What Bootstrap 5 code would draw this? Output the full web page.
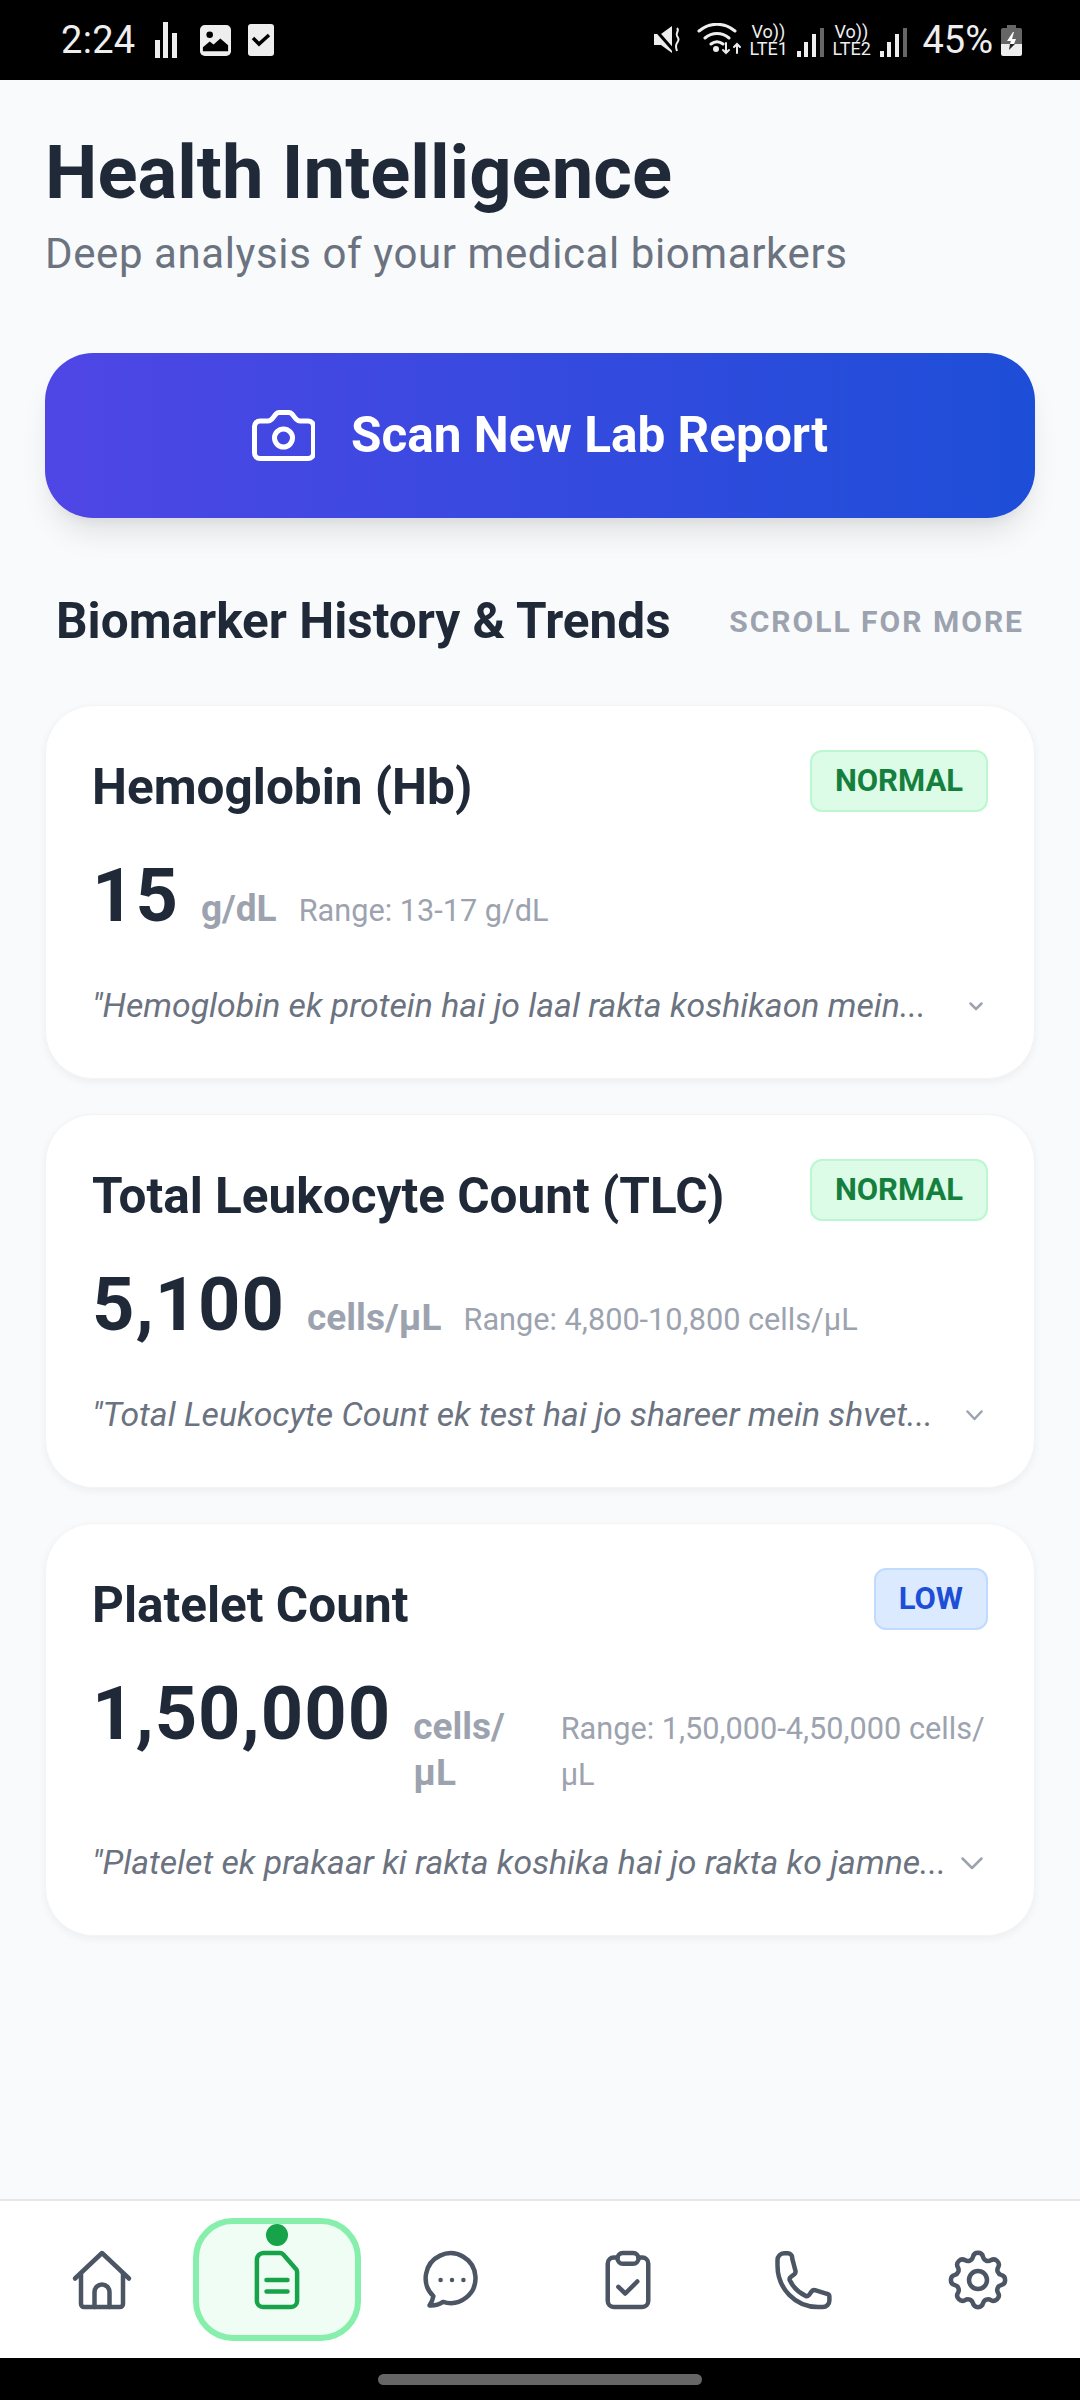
<!DOCTYPE html>
<html lang="en">
<head>
    <meta charset="UTF-8">
    <meta name="viewport" content="width=device-width, initial-scale=1.0">
    <title>Health Intelligence</title>
    <link rel="stylesheet" href="https://cdn.jsdelivr.net/npm/bootstrap@5.3.0/dist/css/bootstrap.min.css">
    <style>
        html, body { height: 2400px; overflow: hidden; }
        body { background: #f9fafb; font-family: Roboto, "Liberation Sans", sans-serif; color: #1f2937; }

        /* status bar */
        .status-top { height: 80px; background: #000; color: #eee; padding: 0 58px 0 61px; }
        .status-time { font-size: 38px; line-height: 1; margin-right: 20px; letter-spacing: .3px; }
        .status-pct { font-size: 38px; line-height: 1; margin-left: 15px; margin-right: 8px; }
        .net-label { font-size: 18px; line-height: 17px; text-align: center; color: #eee; width: 38px; }
        .net-bars { margin-left: 10px; }
        .status-gap-a { margin-left: 23px; }
        .status-gap-c { margin-left: 17px; }
        .status-gap-b { margin-left: 15px; }
        .status-gap-d { margin-left: 7px; }

        /* header */
        .page-wrap { padding: 0 45px; }
        .page-title { font-size: 74.2px; font-weight: 700; line-height: 80px; margin: 53px 0 0; color: #1f2937; }
        .page-sub { font-size: 42px; line-height: 52px; color: #6b7280; letter-spacing: .6px; margin: 15px 0 0; }

        .scan-btn { height: 165px; margin-top: 73px; border: 0; border-radius: 48px; color: #fff; font-size: 49.5px; font-weight: 700;
            background: linear-gradient(90deg, #4f46e5, #1d4ed8); box-shadow: 0 20px 30px -6px rgba(0,0,0,.1), 0 8px 12px -6px rgba(0,0,0,.06); gap: 36px; }
        .scan-btn:hover { color: #fff; }

        .sec-head { margin-top: 73px; padding: 0 11px; }
        .sec-title { font-size: 49.5px; font-weight: 700; line-height: 60px; margin: 0; color: #1f2937; }
        .sec-hint { font-size: 30px; font-weight: 700; color: #9ca3af; letter-spacing: 2px; }

        .cards-wrap { margin-top: 54px; }
        .lab-card { border: 1px solid #f3f4f6; border-radius: 48px; padding: 44px 46px 49px; box-shadow: 0 3px 8px rgba(0,0,0,.05); background: #fff; margin-bottom: 35px; }
        .lab-name { font-size: 49.5px; font-weight: 700; line-height: 60px; margin: 7px 0 0; color: #1f2937; }
        .lab-tag { font-size: 31px; font-weight: 700; line-height: 36px; padding: 11px 23px; border-radius: 12px; border: 2px solid; }
        .tag-ok { background: #dcfce7; border-color: #bbf7d0; color: #15803d; }
        .tag-low { background: #dbeafe; border-color: #bfdbfe; color: #1d4ed8; }
        .lab-nums { margin-top: 34px; gap: 22px; }
        .lab-val { font-size: 74px; font-weight: 700; line-height: 90px; color: #1f2937; letter-spacing: 1px; }
        .lab-unit { font-size: 37px; font-weight: 700; line-height: 46px; color: #9ca3af; }
        .lab-range { font-size: 30.7px; line-height: 46px; color: #9ca3af; }
        .lab-note { margin-top: 42px; }
        .lab-note p { margin: 0; font-size: 33.8px; line-height: 46px; font-style: italic; color: #6b7280; white-space: nowrap; }
        .chev { margin-left: auto; margin-right: 5px; fill: none; stroke: #9ca3af; stroke-width: 2.5; stroke-linecap: round; stroke-linejoin: round; }
        .chev-s { width: 14px; height: 9px; }
        .chev-m { width: 17px; height: 11px; }
        .chev-l { width: 22px; height: 13px; }

        /* bottom nav */
        .nav-bottom { height: 159px; background: #fff; border-top: 2px solid #e5e7eb; padding: 17px 14px; margin-top: auto; }
        .nav-cell { flex: 1 1 0; border: 6px solid transparent; border-radius: 40px; margin: 0 3.5px; position: relative; }
        .nav-cell.is-on { background: #f0fdf4; border-color: #86efac; }
        .nav-dot { position: absolute; top: 0; left: 50%; width: 22px; height: 22px; margin-left: -11px; border-radius: 50%; background: #16a34a; }
        .nav-cell svg { width: 72px; height: 72px; fill: none; stroke: #4b5563; stroke-width: 1.5; stroke-linecap: round; stroke-linejoin: round; }
        .nav-cell.is-on svg { stroke: #16a34a; }
        .gesture-bar { height: 42px; background: #000; }
        .gesture-pill { width: 324px; height: 11px; border-radius: 6px; background: #666; margin-top: 16px; }
        .main-col { height: 2400px; }
    </style>
</head>
<body>
<div class="d-flex flex-column main-col">

    <!-- status bar -->
    <div class="status-top d-flex align-items-center">
        <span class="status-time">2:24</span>
        <svg width="22" height="36" viewBox="0 0 22 36" fill="#eee"><rect x="0" y="18" width="5" height="18"/><rect x="8" y="0" width="5" height="36"/><rect x="17" y="11" width="5" height="25"/></svg>
        <svg class="status-gap-a" width="31" height="31" viewBox="0 0 32 32"><rect width="32" height="32" rx="5" fill="#eee"/><circle cx="10" cy="10" r="3.4" fill="#000"/><path d="M3 27v-4l7-6 4 3 7-6 8 7v6z" fill="#000"/></svg>
        <svg class="status-gap-c" width="26" height="32" viewBox="0 0 26 32"><rect width="26" height="32" rx="3" fill="#eee"/><path d="M5 14l6 6 10-9" fill="none" stroke="#000" stroke-width="3.5"/></svg>

        <div class="ms-auto d-flex align-items-center">
            <svg width="29" height="30" viewBox="0 0 29 30"><path d="M1 9h7l11-8v27l-11-8H1z" fill="#eee"/><path d="M0 2l22 25" stroke="#000" stroke-width="3"/><path d="M24 3c3 3-2 5 0 8s2 4 0 7-1 5 0 8" fill="none" stroke="#eee" stroke-width="2"/></svg>
            <svg class="status-gap-b" width="45" height="34" viewBox="0 0 45 34" fill="none" stroke="#eee" stroke-width="3" stroke-linecap="round"><path d="M2 8c11-9 25-9 36 0M8 15c7-6 17-6 24 0M14 21c4-3 8-3 12 0"/><circle cx="19" cy="26" r="1.5" fill="#eee"/><path d="M29 20v10M26 27l3 3 3-3M40 30V21M37 24l3-3 3 3" stroke-width="2"/></svg>
            <div class="status-gap-d d-flex align-items-end">
                <div class="net-label">Vo))<br>LTE1</div>
                <svg class="net-bars" width="27" height="29" viewBox="0 0 27 29" fill="#eee"><rect y="23" width="4" height="6"/><rect x="7" y="14" width="4" height="15"/><rect x="15" y="6" width="4" height="23"/><rect x="23" y="0" width="4" height="29" fill="#666"/></svg>
            </div>
            <div class="ms-2 d-flex align-items-end">
                <div class="net-label">Vo))<br>LTE2</div>
                <svg class="net-bars" width="27" height="29" viewBox="0 0 27 29" fill="#eee"><rect y="23" width="4" height="6"/><rect x="7" y="14" width="4" height="15"/><rect x="15" y="6" width="4" height="23"/><rect x="23" y="0" width="4" height="29" fill="#666"/></svg>
            </div>
            <span class="status-pct">45%</span>
            <svg width="21" height="31" viewBox="0 0 21 31"><path d="M6 0h9v3h4a2 2 0 0 1 2 2v14H0V5a2 2 0 0 1 2-2h4z" fill="#666"/><path d="M0 19h21v10a2 2 0 0 1-2 2H2a2 2 0 0 1-2-2z" fill="#eee"/><path d="M12 7l-6 9h4l-1 3h4l2-5h-4l2-7z" fill="#fff"/><path d="M9 19l-1 6 6-6z" fill="#222"/></svg>
        </div>
    </div>

    <div class="page-wrap">
        <h1 class="page-title">Health Intelligence</h1>
        <p class="page-sub">Deep analysis of your medical biomarkers</p>

        <button type="button" class="btn scan-btn w-100 d-flex align-items-center justify-content-center">
            <svg width="63" height="51" viewBox="0 0 63 51" fill="none" stroke="#fff" stroke-width="5" stroke-linejoin="round"><path d="M8 11h8c2 0 3-1 4-2l4-5c1-1 2-1.500 3-1.500h10c1 0 2 .5 3 1.500l4 5c1 1 2 2 4 2h8a5.500 5.500 0 0 1 5.500 5.500V43a5.500 5.500 0 0 1-5.500 5.500H8A5.500 5.500 0 0 1 2.500 43V16.500A5.500 5.500 0 0 1 8 11z"/><circle cx="31.500" cy="28" r="9"/></svg>
            <span>Scan New Lab Report</span>
        </button>

        <div class="sec-head d-flex justify-content-between align-items-center">
            <h2 class="sec-title">Biomarker History &amp; Trends</h2>
            <span class="sec-hint">SCROLL FOR MORE</span>
        </div>

        <div class="cards-wrap">
            <div class="card lab-card">
                <div class="d-flex justify-content-between align-items-start">
                    <h3 class="lab-name">Hemoglobin (Hb)</h3>
                    <span class="lab-tag tag-ok">NORMAL</span>
                </div>
                <div class="d-flex align-items-baseline lab-nums">
                    <span class="lab-val">15</span>
                    <span class="lab-unit">g/dL</span>
                    <span class="lab-range">Range: 13-17 g/dL</span>
                </div>
                <div class="d-flex align-items-center lab-note">
                    <p>"Hemoglobin ek protein hai jo laal rakta koshikaon mein...</p>
                    <svg class="chev chev-s" viewBox="0 0 14 9"><path d="M1.500 1.500L7 7l5.500-5.500"/></svg>
                </div>
            </div>

            <div class="card lab-card">
                <div class="d-flex justify-content-between align-items-start">
                    <h3 class="lab-name">Total Leukocyte Count (TLC)</h3>
                    <span class="lab-tag tag-ok">NORMAL</span>
                </div>
                <div class="d-flex align-items-baseline lab-nums">
                    <span class="lab-val">5,100</span>
                    <span class="lab-unit">cells/µL</span>
                    <span class="lab-range">Range: 4,800-10,800 cells/µL</span>
                </div>
                <div class="d-flex align-items-center lab-note">
                    <p>"Total Leukocyte Count ek test hai jo shareer mein shvet...</p>
                    <svg class="chev chev-m" viewBox="0 0 17 11"><path d="M1.500 1.500L8.500 9l7-7.500"/></svg>
                </div>
            </div>

            <div class="card lab-card">
                <div class="d-flex justify-content-between align-items-start">
                    <h3 class="lab-name">Platelet Count</h3>
                    <span class="lab-tag tag-low">LOW</span>
                </div>
                <div class="d-flex align-items-baseline lab-nums">
                    <span class="lab-val">1,50,000</span>
                    <span class="lab-unit">cells/µL</span>
                    <span class="lab-range">Range: 1,50,000-4,50,000 cells/µL</span>
                </div>
                <div class="d-flex align-items-center lab-note">
                    <p>"Platelet ek prakaar ki rakta koshika hai jo rakta ko jamne...</p>
                    <svg class="chev chev-l" viewBox="0 0 22 13"><path d="M1.500 1.500L11 11l9.500-9.500"/></svg>
                </div>
            </div>
        </div>
    </div>

    <!-- bottom nav -->
    <nav class="nav-bottom d-flex align-items-stretch">
        <a class="nav-cell d-flex align-items-center justify-content-center">
            <svg viewBox="0 0 24 24"><path d="M3 11.500l9-8.500 9 8.500"/><path d="M5 10v10a1 1 0 0 0 1 1h12a1 1 0 0 0 1-1V10"/><path d="M9.500 21v-5a2.500 2.500 0 0 1 5 0v5"/></svg>
        </a>
        <a class="nav-cell is-on d-flex align-items-center justify-content-center">
            <span class="nav-dot"></span>
            <svg viewBox="0 0 24 24"><path d="M7.500 3h5.500c.5 0 .8.2 1.100.5l4.200 4.800c.3.300.4.600.4 1V19a2 2 0 0 1-2 2H7.300a2 2 0 0 1-2-2V5.200A2.200 2.200 0 0 1 7.500 3z"/><path d="M8.500 12h7M8.500 15.800h7"/></svg>
        </a>
        <a class="nav-cell d-flex align-items-center justify-content-center">
            <svg viewBox="0 0 24 24"><path d="M4.500 20.500c.7-.9 1.100-2 1.300-3.100A8.300 8.300 0 1 1 9 19.300c-1.300.9-3 1.300-4.500 1.200z"/><path d="M8.200 12h.01M12 12h.01M15.800 12h.01"/></svg>
        </a>
        <a class="nav-cell d-flex align-items-center justify-content-center">
            <svg viewBox="0 0 24 24"><path d="M8.500 4.500H7.250a2 2 0 0 0-2 2V19a2 2 0 0 0 2 2h9.500a2 2 0 0 0 2-2V6.500a2 2 0 0 0-2-2H15.500"/><rect x="8.500" y="3" width="7" height="3.600" rx="1.800"/><path d="M8.800 14.300l2.300 2.200 4-4"/></svg>
        </a>
        <a class="nav-cell d-flex align-items-center justify-content-center">
            <svg viewBox="0 0 24 24"><path d="M3.500 7.200C3.500 14.800 9.400 21 17 21h1.600a2.200 2.200 0 0 0 2.200-2.200v-1.200c0-.5-.3-.9-.8-1l-4-1.200c-.4-.1-.8 0-1.100.4l-.9 1.200c-.3.300-.7.500-1.100.3a11 11 0 0 1-5.300-5.200c-.2-.4 0-.9.300-1.100l1.200-.9c.3-.3.500-.7.400-1.100L8.400 4.800a1.500 1.500 0 0 0-1.400-1.700H5.700a2.200 2.200 0 0 0-2.200 2.200z"/></svg>
        </a>
        <a class="nav-cell d-flex align-items-center justify-content-center">
            <svg viewBox="0 0 24 24"><path d="M10.300 4.300c.4-1.800 3-1.800 3.400 0a1.700 1.700 0 0 0 2.600 1.100c1.500-.9 3.300.8 2.400 2.400a1.700 1.700 0 0 0 1 2.500c1.800.4 1.800 3 0 3.400a1.700 1.700 0 0 0-1 2.600c.9 1.500-.9 3.300-2.400 2.400a1.700 1.700 0 0 0-2.600 1c-.4 1.800-3 1.800-3.400 0a1.700 1.700 0 0 0-2.600-1c-1.500.9-3.300-.9-2.400-2.400a1.700 1.700 0 0 0-1-2.600c-1.800-.4-1.800-3 0-3.400a1.700 1.700 0 0 0 1-2.500c-.9-1.600.9-3.300 2.400-2.400a1.700 1.700 0 0 0 2.600-1.100z"/><circle cx="12" cy="12" r="3"/></svg>
        </a>
    </nav>
    <div class="gesture-bar d-flex justify-content-center">
        <div class="gesture-pill"></div>
    </div>
</div>
<script src="https://cdn.jsdelivr.net/npm/bootstrap@5.3.0/dist/js/bootstrap.bundle.min.js"></script>
</body>
</html>
